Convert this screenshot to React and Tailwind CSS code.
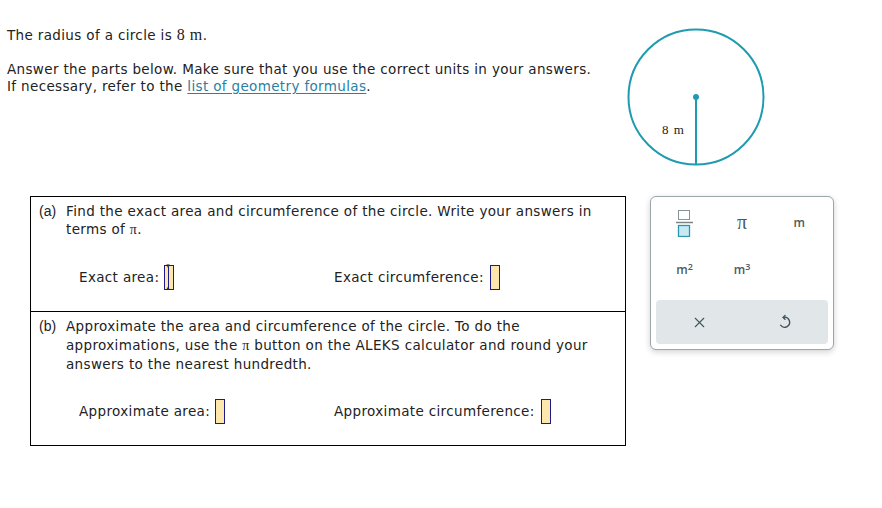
import React from "react";
import { X } from "lucide-react";

const serif = { fontFamily: '"Liberation Serif", "Times New Roman", serif' };

const Blank = ({ active }) => (
  <span className="relative inline-flex items-center">
    <span className="inline-block w-[10px] h-[25px] bg-[#fde7ad] border border-[#1d1a8c]" />
    {active && (
      <>
        <span className="absolute left-[4px] top-[2px] w-[1px] h-[21px] bg-[#1d1a8c]" />
        <span className="absolute -top-[2px] left-[2px] text-[7px] leading-[7px] text-[#222]">▾</span>
        <span className="absolute -bottom-[2px] left-[2px] text-[7px] leading-[7px] text-[#222]">▴</span>
      </>
    )}
  </span>
);

const AnswerRow = ({ left, right, activeLeft }) => (
  <div className="flex items-center h-[28px] pl-[40px]">
    <div className="w-[255px] flex items-center gap-[5px]">
      <span>{left}</span>
      <Blank active={activeLeft} />
    </div>
    <div className="flex items-center gap-[6px]">
      <span>{right}</span>
      <Blank />
    </div>
  </div>
);

const Fraction = () => (
  <svg width="20" height="28" viewBox="0 0 20 28">
    <rect x="3.5" y="1.5" width="11" height="9" fill="white" stroke="#8b9397" />
    <line x1="1" y1="13.5" x2="18" y2="13.5" stroke="#7b8387" strokeWidth="1.5" />
    <rect x="3.5" y="16.5" width="11" height="11" fill="#c9e9f2" stroke="#2a97ab" strokeWidth="1.3" />
  </svg>
);

const Undo = () => (
  <svg width="16" height="16" viewBox="0 0 16 16" fill="none" stroke="#42545b" strokeWidth="1.4" strokeLinecap="round" strokeLinejoin="round">
    <path d="M6.2 3.4 A5 5 0 1 1 3.6 11.2" />
    <path d="M8 1.6 L6.2 3.4 L8 5.2" />
  </svg>
);

const sup = "text-[9px] align-top relative -top-[1px]";

export default function App() {
  return (
    <div
      className="w-[882px] h-[508px] bg-white text-[13.5px] tracking-[0.35px] text-[#222] overflow-hidden"
      style={{ fontFamily: '"DejaVu Sans", Verdana, sans-serif' }}
    >
      <div className="flex items-start pt-[27px]">
        <div className="w-[625px] pl-[7px] leading-[17px]">
          <p className="h-[17px]">
            The radius of a circle is <span style={serif} className="text-[16px] leading-none tracking-[0.5px]">8 m</span>.
          </p>
          <p className="mt-[17px]">
            Answer the parts below. Make sure that you use the correct units in your answers.
          </p>
          <p>
            If necessary, refer to the{" "}
            <a href="#" className="text-[#2a7fa3] underline underline-offset-2">
              list of geometry formulas
            </a>
            .
          </p>
        </div>
        <svg width="142" height="142" viewBox="0 0 142 142" className="-mt-[1px]">
          <circle cx="71" cy="71" r="67.5" fill="none" stroke="#1f9bb0" strokeWidth="2" />
          <line x1="71" y1="71" x2="71" y2="139" stroke="#1f9bb0" strokeWidth="2" />
          <circle cx="71" cy="71" r="3" fill="#1f9bb0" />
          <text x="37" y="108" fontSize="13" fill="#222" style={serif} letterSpacing="1">
            8 m
          </text>
        </svg>
      </div>

      <div className="flex items-start mt-[28px]">
        <div className="ml-[30px] w-[596px] border border-black">
          <div className="pt-[5px] pb-[20px] pl-[8px] border-b border-black">
            <div className="flex leading-[18px]">
              <span className="w-[27px] shrink-0 text-[14px] tracking-normal" style={{ fontFamily: '"Liberation Sans", Arial, sans-serif' }}>(a)</span>
              <span className="pr-[20px]">
                Find the exact area and circumference of the circle. Write your answers in terms of{" "}
                <span style={serif} className="text-[14px]">π</span>.
              </span>
            </div>
            <div className="mt-[24px]">
              <AnswerRow left="Exact area:" right="Exact circumference:" activeLeft />
            </div>
          </div>
          <div className="pt-[5px] pb-[19px] pl-[8px]">
            <div className="flex leading-[18.5px]">
              <span className="w-[27px] shrink-0 text-[14px] tracking-normal" style={{ fontFamily: '"Liberation Sans", Arial, sans-serif' }}>(b)</span>
              <span className="pr-[20px]">
                Approximate the area and circumference of the circle. To do the approximations, use the{" "}
                <span style={serif} className="text-[14px]">π</span> button on the ALEKS calculator and round your
                answers to the nearest hundredth.
              </span>
            </div>
            <div className="mt-[24px]">
              <AnswerRow left="Approximate area:" right="Approximate circumference:" />
            </div>
          </div>
        </div>

        <div
          className="ml-[24px] w-[184px] h-[154px] rounded-[6px] border border-[#9aa6aa] bg-white shadow-[0_2px_6px_rgba(0,0,0,0.18)] p-[5px] flex flex-col text-[#4d5a5f] tracking-normal"
          style={{ fontFamily: '"Open Sans", "Noto Sans", sans-serif' }}
        >
          <div className="grid grid-cols-3 h-[42px] items-center justify-items-center">
            <Fraction />
            <span style={serif} className="text-[20px] leading-none -mt-[2px]">π</span>
            <span className="text-[12px] font-semibold -mt-[1px]">m</span>
          </div>
          <div className="grid grid-cols-3 h-[52px] items-center justify-items-center">
            <span className="text-[12px] font-semibold">m<span className={sup}>2</span></span>
            <span className="text-[12px] font-semibold">m<span className={sup}>3</span></span>
            <span />
          </div>
          <div className="mt-auto h-[44px] rounded-[4px] bg-[#e1e7e9] grid grid-cols-2 items-center justify-items-center">
            <X size={17} strokeWidth={1.5} color="#42545b" />
            <Undo />
          </div>
        </div>
      </div>
    </div>
  );
}
